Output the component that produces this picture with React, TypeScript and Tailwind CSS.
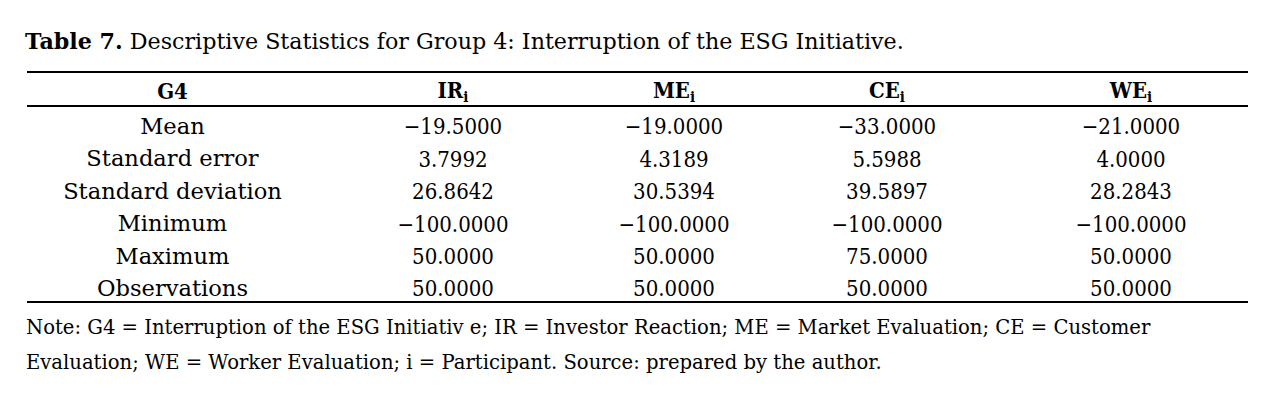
import React from 'react';

const rows: [string, string, string, string, string][] = [
  ['Mean', '\u221219.5000', '\u221219.0000', '\u221233.0000', '\u221221.0000'],
  ['Standard error', '3.7992', '4.3189', '5.5988', '4.0000'],
  ['Standard deviation', '26.8642', '30.5394', '39.5897', '28.2843'],
  ['Minimum', '\u2212100.0000', '\u2212100.0000', '\u2212100.0000', '\u2212100.0000'],
  ['Maximum', '50.0000', '50.0000', '75.0000', '50.0000'],
  ['Observations', '50.0000', '50.0000', '50.0000', '50.0000'],
];

const heads = ['IR', 'ME', 'CE', 'WE'];

const cols = 'grid grid-cols-[291px_270px_172px_254px_234px]';
const serif = { fontFamily: '"DejaVu Serif", serif' };
const condensed = { fontFamily: '"DejaVu Serif Condensed", "DejaVu Serif", serif' };

function App() {
  return (
    <div className="w-[1281px] h-[407px] bg-white text-black pl-[27px] pt-[23px]" style={serif}>
      {/* Caption */}
      <div className="text-[22.2px] leading-[36px] -ml-[2px]">
        <span className="font-bold">Table 7.</span> Descriptive Statistics for Group 4: Interruption of the ESG Initiative.
      </div>

      {/* Table */}
      <div className="w-[1221px] mt-[12px] border-t-2 border-b-2 border-black text-[22px]">
        <div
          className={`${cols} h-[34px] pt-[1px] border-b-2 border-black font-bold items-center font-stretch-condensed`}
          style={condensed}
        >
          <div className="text-center">G4</div>
          {heads.map((h) => (
            <div key={h} className="text-center">
              {h}
              <span className="text-[15px] align-[-4px]">i</span>
            </div>
          ))}
        </div>
        {rows.map((r) => (
          <div key={r[0]} className={`${cols} h-[32.4px] pt-[3px] items-center`}>
            <div className="text-center text-[22.6px]">{r[0]}</div>
            {r.slice(1).map((c, i) => (
              <div key={i} className="text-center font-stretch-condensed" style={condensed}>
                {c}
              </div>
            ))}
          </div>
        ))}
      </div>

      {/* Note */}
      <div className="text-[19.6px] leading-[35px] mt-[7px] -ml-[1px] w-[1230px]">
        Note: G4 = Interruption of the ESG Initiativ e; IR = Investor Reaction; ME = Market Evaluation; CE = Customer
        <br />
        Evaluation; WE = Worker Evaluation; i = Participant. Source: prepared by the author.
      </div>
    </div>
  );
}

export default App;
